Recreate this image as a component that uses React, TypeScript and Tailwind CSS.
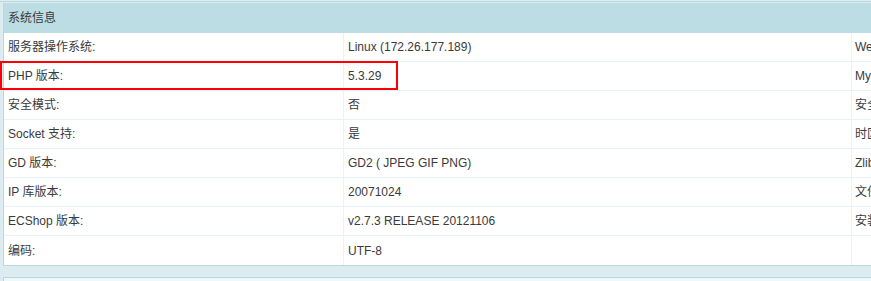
import React from "react";

const rows: [string, string, string][] = [
  ["服务器操作系统:", "Linux (172.26.177.189)", "Web 服务器:"],
  ["PHP 版本:", "5.3.29", "MySQL 版本:"],
  ["安全模式:", "否", "安全模式 GID:"],
  ["Socket 支持:", "是", "时区设置:"],
  ["GD 版本:", "GD2 ( JPEG GIF PNG)", "Zlib 支持:"],
  ["IP 库版本:", "20071024", "文件上传:"],
  ["ECShop 版本:", "v2.7.3 RELEASE 20121106", "安装日期:"],
  ["编码:", "UTF-8", ""],
];

export default function App() {
  return (
    <div
      className="relative w-[871px] h-[281px] overflow-hidden bg-[#dcecf0] text-[12px] text-[#3a3a3a]"
      style={{ fontFamily: '"Liberation Sans", Arial, "Noto Sans CJK SC", sans-serif' }}
    >
      <div className="h-[2px] border-b border-[#b8d8e0]" />
      <div className="ml-[3px] mt-[1px] w-[900px] border-l border-b border-[#b8d8e0] bg-white">
        <div className="h-[30px] bg-[#bcdde4] flex items-center pl-[4px]">系统信息</div>
        {rows.map((r, i) => (
          <div key={i} className={`flex h-[29px] ${i < rows.length - 1 ? "border-b border-[#e8f3f5]" : ""}`}>
            <div className="w-[340px] shrink-0 flex items-center pl-[4px] border-r border-[#e8f3f5] whitespace-nowrap">{r[0]}</div>
            <div className="w-[508px] shrink-0 flex items-center pl-[4px] border-r border-[#e8f3f5] whitespace-nowrap">{r[1]}</div>
            <div className="flex-1 flex items-center pl-[3px] whitespace-nowrap">{r[2]}</div>
          </div>
        ))}
      </div>
      <div className="mt-[11px] ml-[3px] h-[20px] border-t border-l border-[#b8d8e0] bg-[#eef7f9]" />
      <div className="absolute left-0 top-[61px] w-[398px] h-[29px] border-2 border-[#ff0000]" />
    </div>
  );
}
